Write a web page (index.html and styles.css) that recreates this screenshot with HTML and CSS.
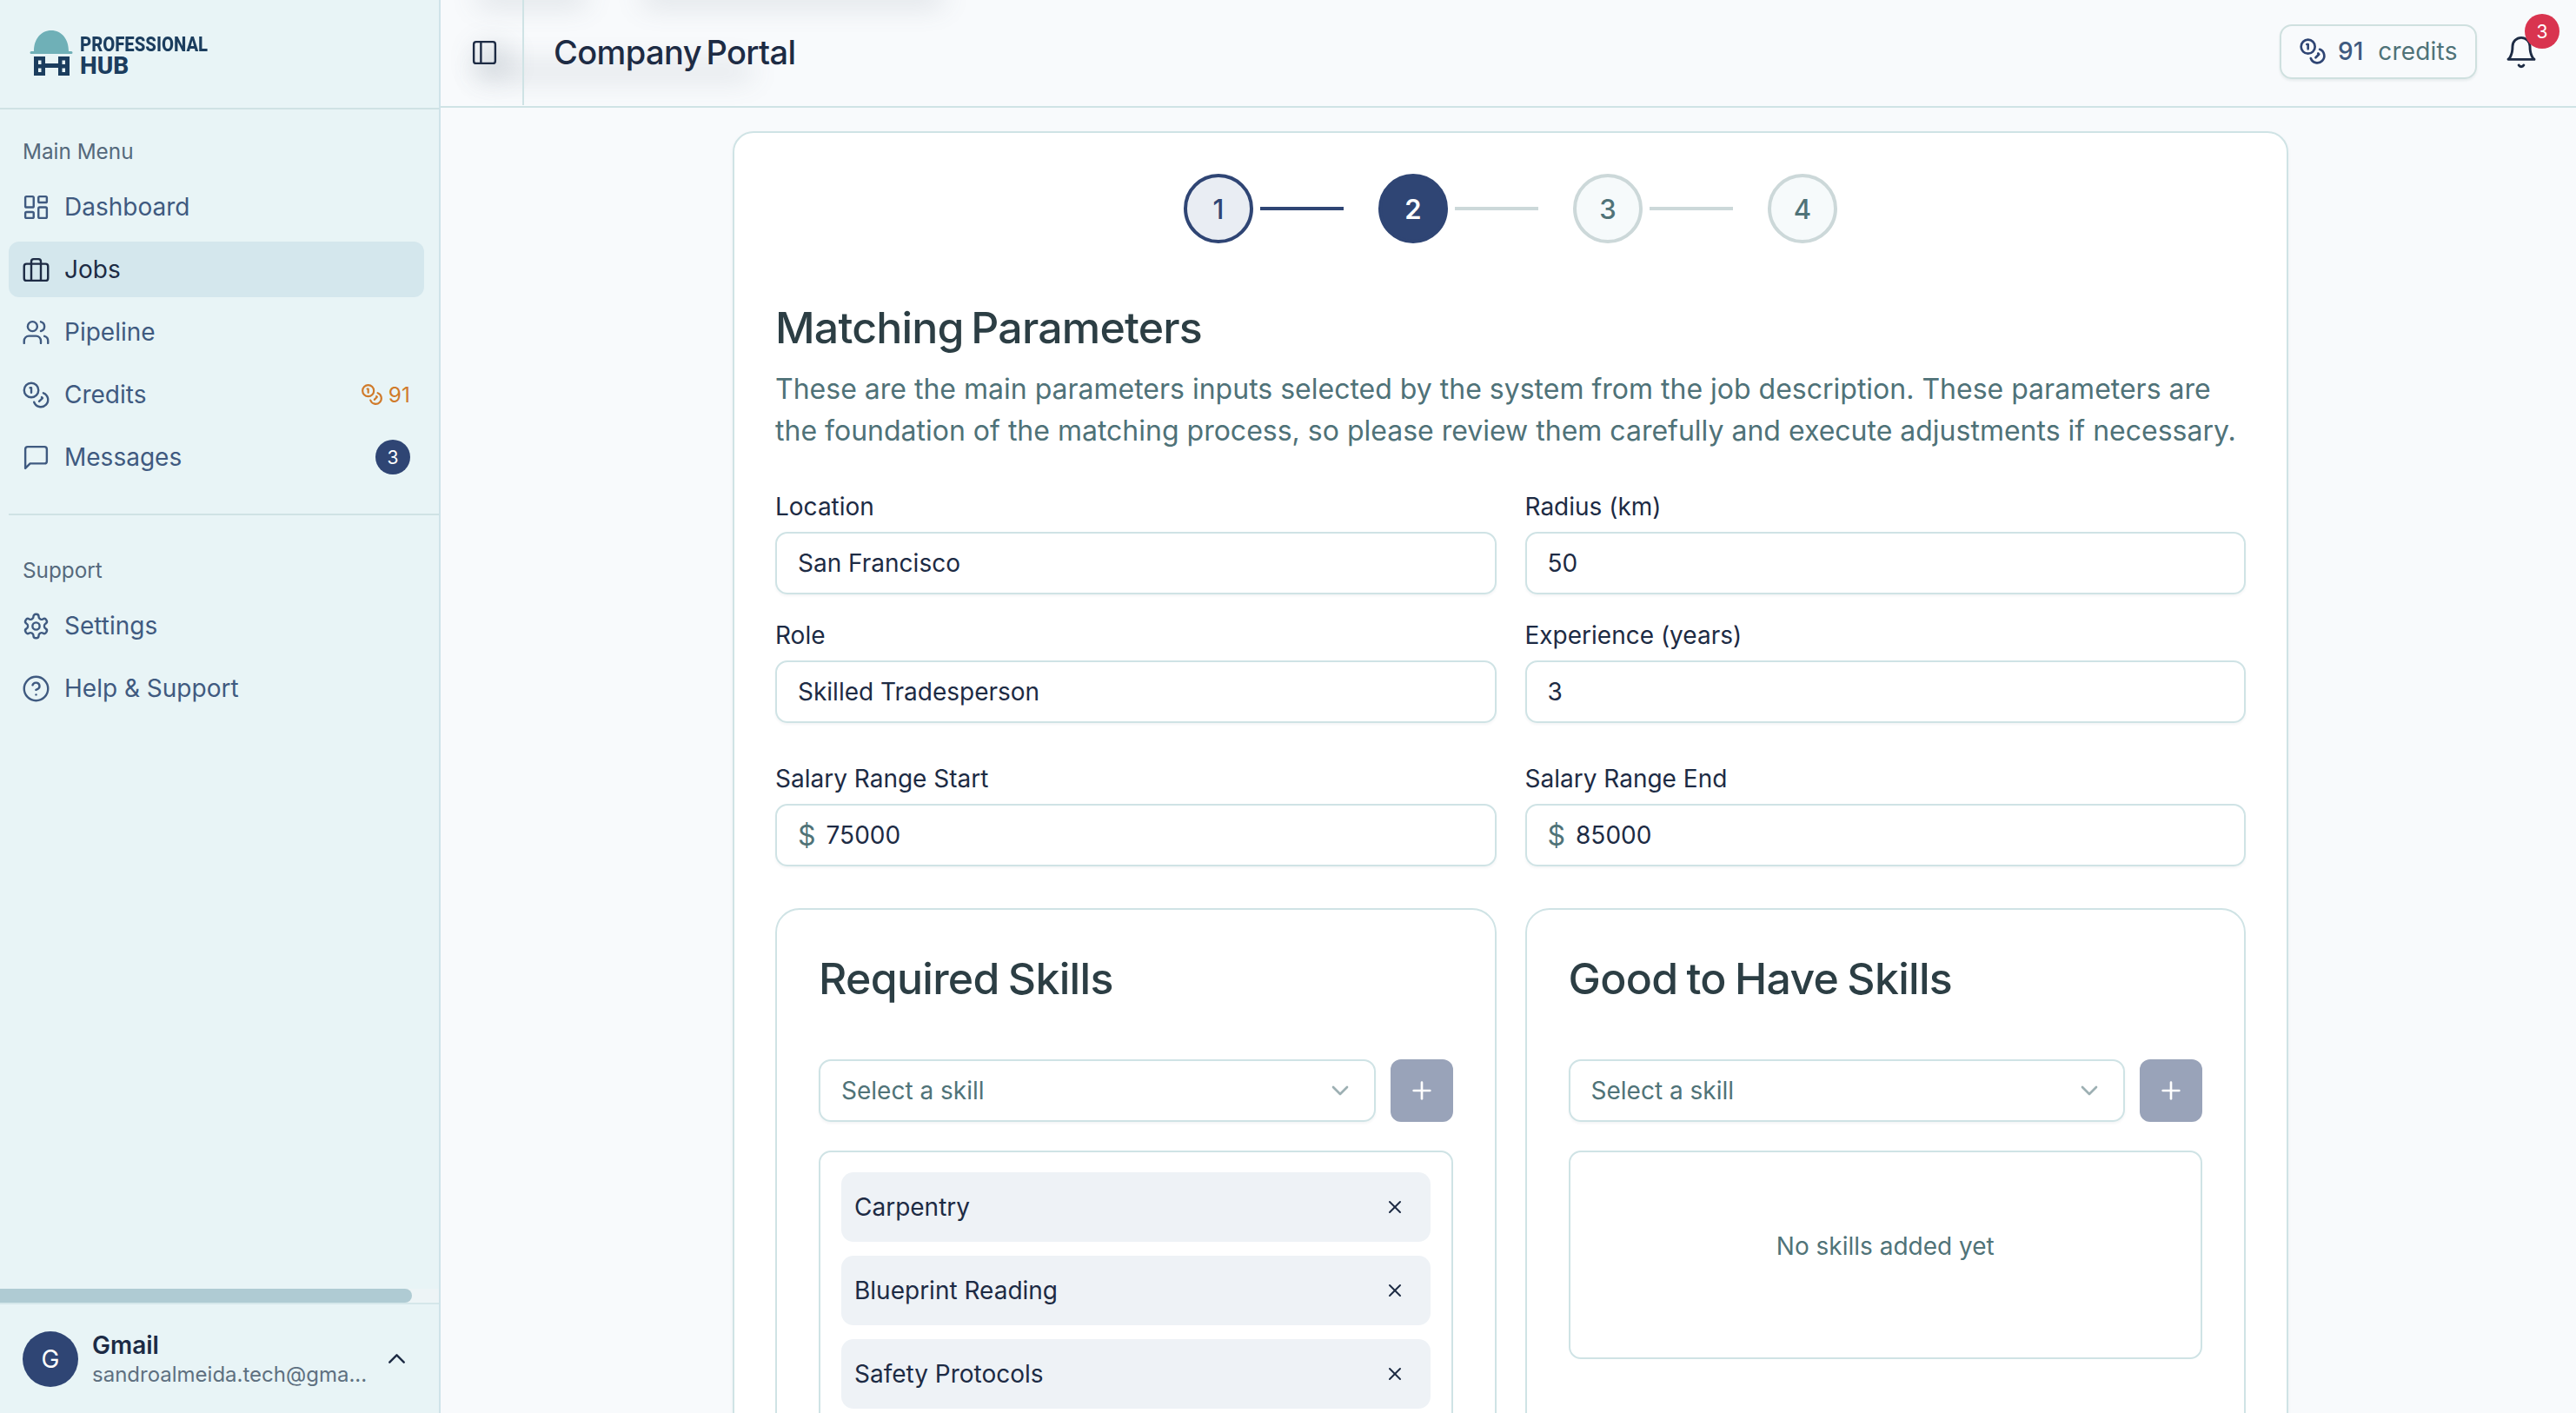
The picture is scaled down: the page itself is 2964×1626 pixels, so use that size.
FILE: index.html
```html
<!DOCTYPE html>
<html lang="en">
<head>
<meta charset="utf-8">
<title>Company Portal</title>
<link rel="stylesheet" href="styles.css">
</head>
<body>
<svg class="defs" width="0" height="0" aria-hidden="true">
  <symbol id="i-dash" viewBox="0 0 24 24"><rect x="3" y="3" width="7" height="9" rx="1"/><rect x="14" y="3" width="7" height="5" rx="1"/><rect x="14" y="12" width="7" height="9" rx="1"/><rect x="3" y="16" width="7" height="5" rx="1"/></symbol>
  <symbol id="i-brief" viewBox="0 0 24 24"><rect x="2" y="7" width="20" height="14" rx="2"/><path d="M16 21V5a2 2 0 0 0-2-2h-4a2 2 0 0 0-2 2v16"/></symbol>
  <symbol id="i-users" viewBox="0 0 24 24"><path d="M16 21v-2a4 4 0 0 0-4-4H6a4 4 0 0 0-4 4v2"/><circle cx="9" cy="7" r="4"/><path d="M22 21v-2a4 4 0 0 0-3-3.870"/><path d="M16 3.130a4 4 0 0 1 0 7.750"/></symbol>
  <symbol id="i-coins" viewBox="0 0 24 24"><circle cx="8" cy="8" r="6"/><path d="M18.090 10.370A6 6 0 1 1 10.340 18"/><path d="M7 6h1v4"/><path d="m16.710 13.880.7.710-2.820 2.820"/></symbol>
  <symbol id="i-msg" viewBox="0 0 24 24"><path d="M21 15a2 2 0 0 1-2 2H7l-4 4V5a2 2 0 0 1 2-2h14a2 2 0 0 1 2 2z"/></symbol>
  <symbol id="i-gear" viewBox="0 0 24 24"><path d="M12.220 2h-.44a2 2 0 0 0-2 2v.18a2 2 0 0 1-1 1.730l-.43.25a2 2 0 0 1-2 0l-.15-.08a2 2 0 0 0-2.730.73l-.22.38a2 2 0 0 0 .73 2.730l.15.1a2 2 0 0 1 1 1.720v.51a2 2 0 0 1-1 1.740l-.15.09a2 2 0 0 0-.73 2.730l.22.38a2 2 0 0 0 2.730.73l.15-.08a2 2 0 0 1 2 0l.43.25a2 2 0 0 1 1 1.730V20a2 2 0 0 0 2 2h.44a2 2 0 0 0 2-2v-.18a2 2 0 0 1 1-1.730l.43-.25a2 2 0 0 1 2 0l.15.08a2 2 0 0 0 2.730-.73l.22-.39a2 2 0 0 0-.73-2.730l-.15-.08a2 2 0 0 1-1-1.740v-.5a2 2 0 0 1 1-1.740l.15-.09a2 2 0 0 0 .73-2.730l-.22-.38a2 2 0 0 0-2.730-.73l-.15.08a2 2 0 0 1-2 0l-.43-.25a2 2 0 0 1-1-1.730V4a2 2 0 0 0-2-2z"/><circle cx="12" cy="12" r="3"/></symbol>
  <symbol id="i-help" viewBox="0 0 24 24"><circle cx="12" cy="12" r="10"/><path d="M9.090 9a3 3 0 0 1 5.830 1c0 2-3 3-3 3"/><path d="M12 17h.01"/></symbol>
  <symbol id="i-panel" viewBox="0 0 24 24"><rect x="3" y="3" width="18" height="18" rx="2"/><path d="M9 3v18"/></symbol>
  <symbol id="i-bell" viewBox="0 0 24 24"><path d="M6 8a6 6 0 0 1 12 0c0 7 3 9 3 9H3s3-2 3-9"/><path d="M10.300 21a1.940 1.940 0 0 0 3.400 0"/></symbol>
  <symbol id="i-up" viewBox="0 0 24 24"><path d="m18 15-6-6-6 6"/></symbol>
  <symbol id="i-down" viewBox="0 0 24 24"><path d="m6 9 6 6 6-6"/></symbol>
  <symbol id="i-plus" viewBox="0 0 24 24"><path d="M5 12h14"/><path d="M12 5v14"/></symbol>
  <symbol id="i-x" viewBox="0 0 24 24"><path d="M18 6 6 18"/><path d="m6 6 12 12"/></symbol>
</svg>
<div class="app">
  <aside class="sidebar">
    <div class="brand">
      <svg class="logo" viewBox="0 0 50 52" aria-hidden="true">
        <path class="logo-hat" d="M5 24C5 10 13 0 25 0s20 10 20 24h3a1.500 1.500 0 0 1 0 3H2a1.500 1.500 0 0 1 0-3z"/>
        <path class="logo-bld" fill-rule="evenodd" d="M5 30h13v8h15v-8h13v22H33v-9H18v9H5zM10 34.500v4.500h3.500v-4.500zM10 43.500v4.500h3.500v-4.500zM37.500 34.500v4.500h3.500v-4.500zM37.500 43.500v4.500h3.500v-4.500z"/>
      </svg>
      <div class="wordmark">
        <span class="wm-top">PROFESSIONAL</span>
        <span class="wm-bottom">HUB</span>
      </div>
    </div>
    <div class="side-scroll">
      <div class="nav-group">
        <div class="nav-title">Main Menu</div>
        <a class="nav-item"><svg class="ico"><use href="#i-dash"/></svg><span>Dashboard</span></a>
        <a class="nav-item active"><svg class="ico"><use href="#i-brief"/></svg><span>Jobs</span></a>
        <a class="nav-item"><svg class="ico"><use href="#i-users"/></svg><span>Pipeline</span></a>
        <a class="nav-item"><svg class="ico"><use href="#i-coins"/></svg><span>Credits</span><span class="nav-credits"><svg class="ico-sm"><use href="#i-coins"/></svg>91</span></a>
        <a class="nav-item"><svg class="ico"><use href="#i-msg"/></svg><span>Messages</span><span class="nav-count">3</span></a>
      </div>
      <div class="nav-rule"></div>
      <div class="nav-group">
        <div class="nav-title">Support</div>
        <a class="nav-item"><svg class="ico"><use href="#i-gear"/></svg><span>Settings</span></a>
        <a class="nav-item"><svg class="ico"><use href="#i-help"/></svg><span>Help &amp; Support</span></a>
      </div>
    </div>
    <div class="side-track"><div class="side-thumb"></div></div>
    <div class="account">
      <div class="avatar">G</div>
      <div class="account-text">
        <div class="account-name">Gmail</div>
        <div class="account-mail">sandroalmeida.tech@gma...</div>
      </div>
      <svg class="ico account-chev"><use href="#i-up"/></svg>
    </div>
  </aside>
  <main class="main">
    <header class="topbar">
      <div class="ghost ghost-a"></div>
      <div class="ghost ghost-d"></div>
      <div class="ghost ghost-b"></div>
      <div class="ghost ghost-c"></div>
      <button class="panel-btn"><svg class="ico"><use href="#i-panel"/></svg></button>
      <h1 class="portal">Company Portal</h1>
      <div class="credits-pill"><svg class="ico-pill"><use href="#i-coins"/></svg><b>91</b><span>credits</span></div>
      <div class="bell"><svg class="ico-bell"><use href="#i-bell"/></svg><span class="bell-count">3</span></div>
    </header>
    <div class="content">
      <section class="card">
        <div class="stepper">
          <div class="step done">1</div><div class="step-line on"></div>
          <div class="step current">2</div><div class="step-line"></div>
          <div class="step">3</div><div class="step-line"></div>
          <div class="step">4</div>
        </div>
        <h2 class="card-title">Matching Parameters</h2>
        <p class="card-desc">These are the main parameters inputs selected by the system from the job description. These parameters are the foundation of the matching process, so please review them carefully and execute adjustments if necessary.</p>
        <div class="form-grid">
          <div class="field"><label>Location</label><div class="input">San Francisco</div></div>
          <div class="field"><label>Radius (km)</label><div class="input">50</div></div>
          <div class="field"><label>Role</label><div class="input">Skilled Tradesperson</div></div>
          <div class="field"><label>Experience (years)</label><div class="input">3</div></div>
          <div class="field salary"><label>Salary Range Start</label><div class="input"><span class="dollar">$</span>75000</div></div>
          <div class="field salary"><label>Salary Range End</label><div class="input"><span class="dollar">$</span>85000</div></div>
        </div>
        <div class="skills-grid">
          <div class="skill-card">
            <h3>Required Skills</h3>
            <div class="skill-add">
              <div class="select"><span>Select a skill</span><svg class="ico-chev"><use href="#i-down"/></svg></div>
              <button class="add-btn"><svg class="ico-plus"><use href="#i-plus"/></svg></button>
            </div>
            <div class="skill-list">
              <div class="chip"><span>Carpentry</span><svg class="ico-x"><use href="#i-x"/></svg></div>
              <div class="chip"><span>Blueprint Reading</span><svg class="ico-x"><use href="#i-x"/></svg></div>
              <div class="chip"><span>Safety Protocols</span><svg class="ico-x"><use href="#i-x"/></svg></div>
            </div>
          </div>
          <div class="skill-card">
            <h3>Good to Have Skills</h3>
            <div class="skill-add">
              <div class="select"><span>Select a skill</span><svg class="ico-chev"><use href="#i-down"/></svg></div>
              <button class="add-btn"><svg class="ico-plus"><use href="#i-plus"/></svg></button>
            </div>
            <div class="skill-empty">No skills added yet</div>
          </div>
        </div>
      </section>
    </div>
  </main>
</div>
</body>
</html>
```
FILE: styles.css
```css
* { box-sizing: border-box; }
html, body { margin: 0; height: 100%; overflow: hidden; }
body { font-family: Inter, "Liberation Sans", sans-serif; color: #1d2b44; background: #f8fafc; }
.defs { position: absolute; }
svg { fill: none; stroke: currentColor; stroke-linecap: round; stroke-linejoin: round; stroke-width: 2; flex: none; }

.app { display: grid; grid-template-columns: 507px 1fr; height: 1626px; }

/* sidebar */
.sidebar { display: flex; flex-direction: column; background: #e8f4f6; border-right: 2px solid #cfe3e9; height: 1626px; }
.brand { height: 126px; flex: none; display: flex; align-items: center; gap: 8px; padding: 0 0 3px 34px; border-bottom: 2px solid #cfe2e4; }
.logo { width: 50px; height: 52px; stroke: none; }
.logo-hat { fill: #6fb0b7; }
.logo-bld { fill: #1b3d5e; }
.wordmark { display: flex; flex-direction: column; padding-top: 6px; font-family: Roboto, sans-serif; font-weight: 800; color: #1b3d5e; }
.wm-top { font-size: 24px; line-height: 23px; transform: scaleX(.845); transform-origin: left center; white-space: nowrap; }
.wm-bottom { font-size: 28px; line-height: 25px; }
.side-scroll { flex: 1; min-height: 0; padding: 32px 0 0 10px; }
.nav-group { padding-right: 17px; }
.nav-title { height: 46px; margin-bottom: 2px; padding-left: 16px; font-size: 24.300px; line-height: 32px; color: #55697c; }
.nav-item { display: flex; align-items: center; height: 64px; margin-bottom: 8px; padding: 0 16px 0 15px; gap: 16px; border-radius: 12px; font-size: 28px; color: #3f5a80; }
.nav-item.active { background: #d4e7ed; color: #1d2b44; }
.ico { width: 33px; height: 33px; stroke-width: 1.750; }
.nav-credits { margin-left: auto; display: flex; align-items: center; gap: 6px; font-size: 24.500px; color: #d07a2a; }
.ico-sm { width: 26px; height: 26px; }
.nav-count { margin-left: auto; width: 40px; height: 40px; border-radius: 50%; background: #2f4574; color: #fff; font-size: 21px; display: flex; align-items: center; justify-content: center; }
.nav-rule { height: 2px; background: #cfe2e4; margin: 33px 0 47px; }
.side-track { height: 16px; flex: none; background: #edf4f6; }
.side-thumb { width: 474px; height: 16px; background: #afcbd3; border-radius: 0 8px 8px 0; }
.account { height: 127px; flex: none; display: flex; align-items: center; padding: 0 32px 0 26px; border-top: 2px solid #d5e7ea; }
.avatar { width: 64px; height: 64px; border-radius: 50%; background: #2f4574; color: #fff; font-size: 28px; display: flex; align-items: center; justify-content: center; flex: none; }
.account-text { margin-left: 16px; padding-top: 2px; }
.account-name { font-size: 28px; font-weight: 600; line-height: 34px; color: #1c2b45; }
.account-mail { font-size: 24px; line-height: 34px; color: #5e7080; white-space: nowrap; }
.account-chev { color: #1d2b44; margin-left: auto; }

/* main */
.main { min-width: 0; height: 1626px; overflow: hidden; }
.topbar { position: relative; overflow: hidden; height: 124px; display: flex; align-items: center; padding: 0 20px 2px 0; background: #f8fafc; border-bottom: 2px solid #cfe3e5; }
.ghost { position: absolute; background: #5a6a7a; filter: blur(16px); opacity: .2; border-radius: 10px; }
.ghost-a { left: 40px; top: 74px; width: 320px; height: 16px; }
.ghost-d { left: 40px; top: 52px; width: 40px; height: 34px; }
.ghost-b { left: 40px; top: -14px; width: 130px; height: 20px; }
.ghost-c { left: 230px; top: -14px; width: 350px; height: 20px; }
.panel-btn { position: relative; width: 96px; height: 122px; flex: none; border: 0; border-right: 2px solid #cfe3e5; background: none; color: #1d2b44; display: flex; align-items: center; justify-content: center; padding: 0 0 0 6px; }
.portal { position: relative; margin: 0 0 0 34px; font-size: 38px; font-weight: 500; letter-spacing: -.6px; word-spacing: -4px; color: #1d2b44; }
.credits-pill { margin: 0 0 2px auto; width: 227px; height: 63px; border: 2px solid #cfe0df; border-radius: 14px; display: flex; align-items: center; padding-left: 20px; font-size: 28px; box-shadow: 0 2px 3px rgba(30,60,70,.08); position: relative; }
.credits-pill b { font-weight: 500; color: #3f5a80; margin-left: 13px; }
.credits-pill span { color: #4f7278; margin-left: 17px; letter-spacing: .2px; }
.ico-pill { width: 32px; height: 32px; color: #2f4574; }
.bell { position: relative; margin-left: 31px; width: 40px; height: 40px; color: #1d2b44; margin-right: 23px; }
.ico-bell { width: 40px; height: 40px; stroke-width: 1.750; }
.bell-count { position: absolute; left: 24px; top: -24px; width: 40px; height: 40px; border-radius: 50%; background: #d9344f; color: #fff; font-size: 21px; display: flex; align-items: center; justify-content: center; }

.content { padding: 27px 0 0 336px; }
.card { width: 1790px; padding: 47px 47px 0; background: #fff; border: 2px solid #cfe3e5; border-radius: 24px; box-shadow: 0 2px 4px rgba(30,60,70,.05); }

.stepper { display: flex; justify-content: center; align-items: center; height: 80px; }
.step { width: 80px; height: 80px; border-radius: 50%; border: 4px solid #ccd8d9; background: #f6fafb; color: #507378; font-size: 31px; font-weight: 500; display: flex; align-items: center; justify-content: center; }
.step.done { background: #e9edf3; border-color: #2f4574; color: #2f4574; }
.step.current { background: #2f4574; border-color: #2f4574; color: #fff; font-weight: 600; }
.step-line { width: 96px; height: 4px; background: #ccd8d9; margin: 0 40px 0 8px; }
.step-line.on { background: #2f4574; }

.card-title { margin: 67px 0 0; font-size: 50px; line-height: 60px; font-weight: 500; letter-spacing: -.8px; word-spacing: -4px; color: #2c3e44; }
.card-desc { margin: 17px 0 0; font-size: 32px; line-height: 47.500px; color: #4f7278; }

.form-grid { display: grid; grid-template-columns: 1fr 1fr; column-gap: 33px; margin-top: 46px; }
.field { height: 148px; }
.field label { display: block; font-size: 28px; line-height: 36px; margin: 0 0 11px; font-weight: 400; color: #1d2b44; }
.input { height: 72px; border: 2px solid #cfe3e5; border-radius: 14px; padding: 0 24px; display: flex; align-items: center; font-size: 28px; color: #1d2b44; box-shadow: 0 2px 3px rgba(30,60,70,.05); }
.salary { height: 166px; padding-top: 17px; }
.dollar { font-size: 32px; color: #507378; margin-right: 12px; }

.skills-grid { display: grid; grid-template-columns: 1fr 1fr; column-gap: 33px; margin-top: 18px; }
.skill-card { border: 2px solid #cfe3e5; border-radius: 28px; padding: 0 48px; height: 620px; }
.skill-card h3 { margin: 46px 0 0; font-size: 50px; line-height: 66px; font-weight: 500; letter-spacing: -.7px; word-spacing: -2.500px; color: #2c3e44; }
.skill-add { display: flex; gap: 17px; margin-top: 60px; }
.select { flex: 1; height: 72px; border: 2px solid #cfe3e5; border-radius: 14px; padding: 0 23px 0 24px; display: flex; align-items: center; justify-content: space-between; font-size: 28px; color: #507378; box-shadow: 0 2px 3px rgba(30,60,70,.05); }
.ico-chev { width: 32px; height: 32px; color: #9db0b3; }
.add-btn { width: 72px; height: 72px; flex: none; border: 0; border-radius: 12px; background: #99a3b9; color: #fff; display: flex; align-items: center; justify-content: center; padding: 0; }
.ico-plus { width: 32px; height: 32px; }
.skill-list { margin-top: 33px; border: 2px solid #cfe3e5; border-radius: 14px; padding: 23px 24px; display: flex; flex-direction: column; gap: 16px; }
.chip { height: 80px; border-radius: 14px; background: #eef2f6; padding: 0 29px 0 15px; display: flex; align-items: center; justify-content: space-between; font-size: 28px; color: #1d2b44; }
.ico-x { width: 24px; height: 24px; color: #1d2b44; }
.skill-empty { margin-top: 33px; height: 240px; border: 2px solid #cfe3e5; border-radius: 14px; padding-top: 90px; text-align: center; font-size: 28px; line-height: 36px; color: #507378; }
```
